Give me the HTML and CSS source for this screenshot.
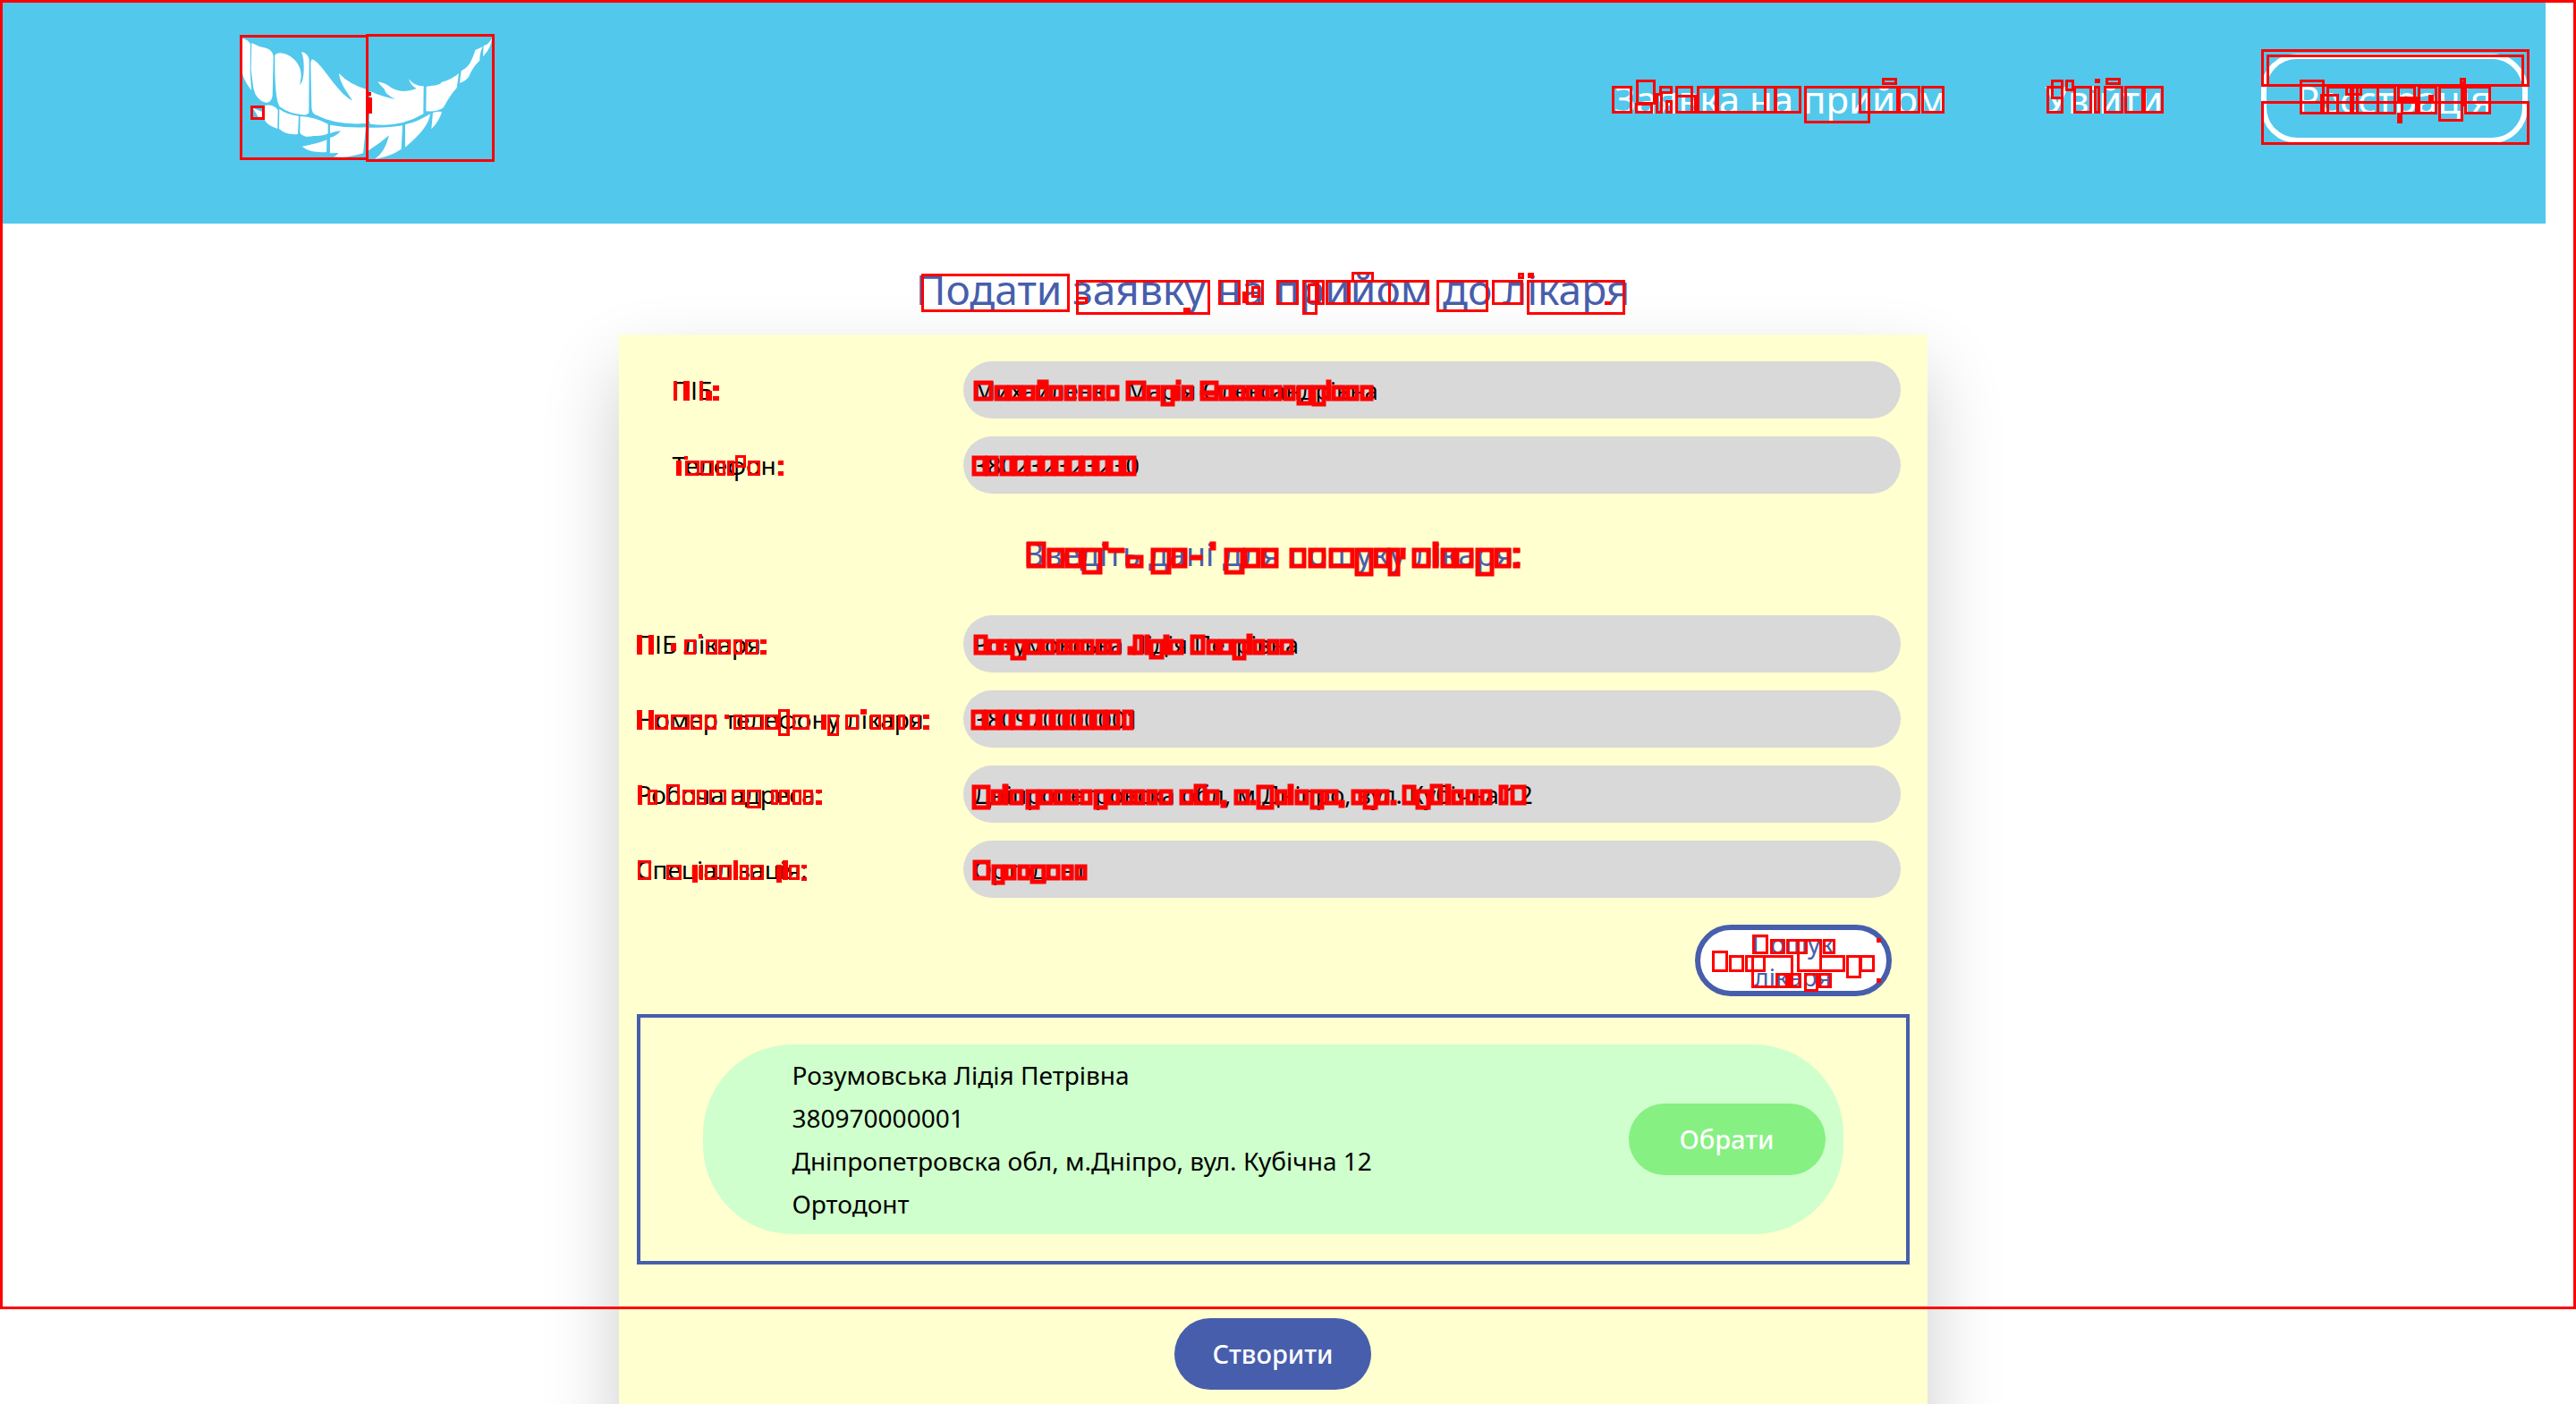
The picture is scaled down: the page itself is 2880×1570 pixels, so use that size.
FILE: index.html
```html
<!DOCTYPE html>
<html lang="uk">
<head>
<meta charset="utf-8">
<title>Подати заявку на прийом до лікаря</title>
<link rel="stylesheet" href="styles.css">
</head>
<body>
<header class="header">
  <a class="logo" href="#" aria-label="На головну">
    <svg class="logo-mark" viewBox="120 60 840 420" fill="#fff" aria-hidden="true">
      <path d="M122 68Q142 72 150 88L149 180 153 243Q124 205 122 180Z"/>
      <path d="M154 84Q180 98 205 102 224 110 227 128L224 262Q218 288 200 284 168 274 160 236L152 175Z"/>
      <path d="M232 126Q236 117 252 118C292 122 322 160 320 195L316 226Q328 212 329 175 330 135 321 114 344 118 347 142L346 318Q340 328 325 325 280 322 248 298 230 270 232 126Z"/>
      <path d="M356 138C395 155 430 240 491 278 492 272 450 225 447 186Q480 222 540 240L538 354Q440 362 366 324 356 318 355 300L352 150Z"/>
      <path d="M552 246Q590 264 636 273 600 255 600 240 584 226 577 214 602 218 622 234 662 256 707 237 688 228 681 205 700 230 731 229L730 322Q650 370 552 356L548 345Z"/>
      <path d="M740 230Q790 226 790 216 820 210 849 186L842 235Q822 255 798 300 780 316 739 313Z"/>
      <path d="M857 178Q880 165 887 150 900 125 904 108L929 97Q918 120 919 143 895 165 882 198 870 214 852 218Z"/>
      <path d="M932 93Q948 90 960 68 958 100 930 130Z"/>
      <path d="M158 302L197 318 195 338H180Z"/>
      <path d="M197 294Q225 288 242 308L241 372Q206 360 197 342Z"/>
      <path d="M247 306Q275 326 312 329L309 390Q270 394 246 372Z"/>
      <path d="M317 330Q365 332 410 356V388Q392 398 362 396 330 404 316 386Z"/>
      <path d="M323 431Q370 424 406 409L405 450Q350 454 323 431Z"/>
      <path d="M417 359Q475 370 537 367L528 454Q490 466 460 467L428 466Q440 462 446 453L417 454V402Q440 396 453 379 438 380 417 387Z"/>
      <path d="M548 368Q610 370 660 361L656 440Q620 465 568 473 602 450 615 394 585 420 546 445Z"/>
      <path d="M669 358Q710 350 753 322 748 370 669 434Z"/>
      <path d="M762 318Q778 312 792 315 784 345 757 373Z"/>
    </svg>
  </a>
  <nav class="nav">
    <a class="nav-link" href="#">Заявка на прийом</a>
    <a class="nav-link" href="#">Увійти</a>
    <a class="nav-button" href="#">Реєстрація</a>
  </nav>
</header>
<main class="main">
  <h1 class="title">Подати заявку на прийом до лікаря</h1>
  <form class="card">
    <div class="fields">
      <div class="field field-own"><label for="name">ПІБ:</label><input id="name" type="text" value="Михайленко Марія Олександрівна"></div>
      <div class="field field-own"><label for="phone">Телефон:</label><input id="phone" type="text" value="380232323230"></div>
    </div>
    <h2 class="subtitle">Введіть дані для пошуку лікаря:</h2>
    <div class="fields">
      <div class="field"><label for="doctor">ПІБ лікаря:</label><input id="doctor" type="text" value="Розумовська Лідія Петрівна"></div>
      <div class="field"><label for="doctor-phone">Номер телефону лікаря:</label><input id="doctor-phone" type="text" value="380970000001"></div>
      <div class="field"><label for="address">Робоча адреса:</label><input id="address" type="text" value="Дніпропетровска обл, м.Дніпро, вул. Кубічна 12"></div>
      <div class="field"><label for="speciality">Спеціалізація:</label><input id="speciality" type="text" value="Ортодонт"></div>
    </div>
    <button class="button button-search" type="button">Пошук лікаря</button>
    <section class="results">
      <article class="doctor">
        <div class="doctor-info">
          <p>Розумовська Лідія Петрівна</p>
          <p>380970000001</p>
          <p>Дніпропетровска обл, м.Дніпро, вул. Кубічна 12</p>
          <p>Ортодонт</p>
        </div>
        <button class="button button-choose" type="button">Обрати</button>
      </article>
    </section>
    <button class="button button-create" type="submit">Створити</button>
  </form>
</main>
<svg class="marks" viewBox="0 0 2880 1570" aria-hidden="true"></svg>
<script src="marks.js"></script>
</body>
</html>
```

FILE: styles.css
```css
* { box-sizing: border-box; margin: 0; }
html { scrollbar-width: none; }
body { position: relative; min-height: 100vh; padding-right: 34px; overflow-x: hidden; background: #fff; color: #000; font: 28px/38px "Noto Sans", "Open Sans", sans-serif; }
.header { display: flex; justify-content: space-between; align-items: flex-start; padding: 40px 20px 70px 270px; background: #52c8ed; }
.logo-mark { display: block; width: 280px; height: 140px; }
.nav { display: flex; align-items: center; gap: 110px; padding-top: 20px; font-size: 42px; line-height: 56px; }
.nav a { color: #fff; text-decoration: none; }
.nav-link { padding-top: 2px; }
.nav-button { width: 298px; height: 100px; border: 6px solid #fff; border-radius: 40px; line-height: 90px; text-align: center; }
.title { padding: 42px 0 20px; color: #475eac; font-size: 46px; line-height: 62px; font-weight: 400; text-align: center; }
.card { display: flex; flex-direction: column; width: 1463px; max-width: 100%; margin: 0 auto; padding: 30px 20px 60px; background: #ffffcf; box-shadow: 0 40px 80px rgba(0, 0, 0, .2); }
.fields { display: grid; gap: 20px; }
.field { display: flex; justify-content: space-between; align-items: center; padding-right: 10px; }
.field-own { padding-left: 40px; }
.field input { width: 1048px; height: 64px; padding: 0 12px; border: 0; border-radius: 32px; background: #d9d9d9; color: #000; font: inherit; font-size: 27px; }
.subtitle { padding: 44px 0; color: #475eac; font-size: 36px; line-height: 48px; font-weight: 400; text-align: center; }
.button { width: 220px; height: 80px; padding: 0; border: 0; border-radius: 40px; color: #fff; font: inherit; font-size: 29px; font-weight: 500; }
.button-search { display: flex; align-items: center; align-self: flex-end; margin: 30px 20px 20px; padding: 0 40px; border: 6px solid #475eac; background: #fff; color: #475eac; font-size: 28px; font-weight: 400; line-height: 37px; }
.results { padding: 30px 70px; border: 4px solid #475eac; }
.doctor { display: flex; justify-content: space-between; align-items: center; padding: 10px 20px 10px 100px; border-radius: 100px; background: #cfffcc; line-height: 48px; }
.button-choose { background: #86f082; }
.button-create { align-self: center; margin-top: 60px; background: #475eac; }
.marks { position: absolute; top: 0; left: 0; width: 2880px; height: 1570px; overflow: hidden; pointer-events: none; }
.mark { fill: none; stroke: #f00; stroke-width: 3; }
.mark-dense { stroke-width: 5; }
.mark-solid { fill: #f00; }
```

FILE: marks.js
```js
// Each group has an origin, a scale and the default top and bottom of its line.
// A mark is "left,right" or "left,top,right,bottom"; a star fills it.
const groups = [
  { at: [0, 0], scale: [1, 1], line: [0, 0], marks: '0,0,2880,1464' },
  { at: [230, 20], scale: [3, 3], line: [0, 0], marks: '115,58,545,476 538,54,968,482 150,294,197,341 545,268,555,322* 543,249,550,255*' },
  { at: [1780, 40], scale: [2.3758, 3], line: [168, 262], marks: '53,108 116,148,168,230 113,225,162,262 177,168,215,196 168,192,188,262 195,216,215,262 222,268 222,198,277,262 278,332 331,463 457,489 485,555 563,168,738,293 707,814 770,141,809,166 812,872 875,937 1208,1253 1219,147,1253,212 1257,148,1280,185 1277,1329 1333,1349 1335,145,1350,160* 1360,1411 1364,141,1404,166 1414,1465 1464,1519' },
  { at: [2480, 0], scale: [3, 3], line: [288, 384], marks: '144,165,1044,291 162,183,1026,291 144,339,1044,486 273,267,356,384 342,315,404,384 363,450 426,288,482,320 447,470 462,540 531,597 600,288,664,345 612,336,668,384 600,378,617,413* 610,324,668,345* 670,735 705,318,722,345* 738,288,822,408 810,261,831,282 817,282,831,357* 825,915' },
  { at: [1010, 290], scale: [1.889, 3], line: [70, 152], marks: '38,48,352,176 364,70,648,185 364,126,390,149 591,163,606,176 665,712 723,761 716,108,724,146* 735,90,754,130 788,834 842,70,875,185 854,82,875,148 873,890 892,943 939,1030 947,43,993,77 1024,1110 1125,70,1236,176 1243,1310 1297,46,1311,66 1318,46,1332,64 1317,70,1524,185 1481,142,1495,152*' },
  { dense: true, at: [1080, 410], scale: [3, 3], line: [63, 114], marks: '27,48,90,114 97,140 142,190 190,230 234,276 240,45,275,66 280,325 330,370 378,420 427,465 470,513 537,48,603,114 606,650 655,63,699,132 700,718 705,45,718,60* 722,762 786,48,846,114 786,80,846,90* 848,893 893,935 940,980 980,1018 1020,1058 1064,1105 1111,63,1160,129 1162,63,1206,132 1209,45,1224,114 1228,1272 1276,1318 1323,1365' },
  { dense: true, at: [1080, 410], scale: [3, 3], line: [300, 366], marks: '21,68 67,108 113,160 159,206 205,252 251,298 297,342 342,389 388,435 434,480 480,526 526,570' },
  { at: [1130, 590], scale: [2.6133, 3], line: [69, 134], dense: true, marks: '47,48,103,134 108,157 160,208 210,69,267,155 268,48,285,76* 285,69,333,84* 336,92,387,134 411,69,468,155 470,516 524,92,560,108* 583,48,598,76* 625,69,682,155 680,728 733,781 816,863 870,920 931,1003 1006,69,1058,161 1060,1108 1103,69,1138,161 1140,69,1152,104* 1174,1226 1234,48,1250,134* 1257,1298 1300,1352 1360,69,1412,161 1414,1462 1468,69,1488,84* 1468,118,1488,134*' },
  { dense: true, at: [690, 670], scale: [1.96, 3], line: [136, 186], marks: '782,121,811,186 811,838 838,863 863,136,896,204 896,930 930,958 962,988 990,1014 1016,1044 1048,1075 1077,1103 1120,160,1134,186* 1130,121,1153,186 1156,121,1166,186* 1166,136,1198,201 1198,121,1210,186* 1210,1240 1256,121,1288,186 1292,1320 1320,1348 1348,136,1378,204 1380,118,1391,186* 1393,1420 1424,1450 1453,1482' },
  { at: [690, 670], scale: [1.96, 3], line: [136, 186], marks: '44,121,54,186* 68,121,80,186* 118,146,130,175* 147,172 178,118,187,132* 195,220 222,248 255,274 280,310 314,136,328,150* 314,172,328,186*' },
  { dense: true, at: [690, 670], scale: [1.96, 3], line: [373, 438], marks: '777,808 806,837 836,866 865,896 895,925 924,955 953,984 983,1014 1012,1043 1042,1072 1071,1101 1108,1130' },
  { at: [690, 670], scale: [1.96, 3], line: [388, 438], marks: '44,373,54,438* 68,373,80,438* 82,112 118,158 160,187 192,218 235,388,245,402* 255,275 280,322 324,352 353,370,379,459 385,422 446,458* 460,388,487,459 500,530 534,370,546,386* 554,578 582,608 615,632 640,665 670,388,684,402* 670,424,684,438*' },
  { at: [680, 360], scale: [1.7422, 3], line: [466, 516], marks: '127,198,134,264* 147,198,158,264* 177,198,185,264* 190,232,202,264* 203,214,216,230* 203,248,216,264* 133,142* 148,450,154,460* 150,178 180,205 210,228 232,246 247,448,268,490 271,296 331,464,341,480* 331,500,341,516*' },
  { at: [690, 850], scale: [1.4792, 3], line: [100, 150], marks: '34,85,42,150* 50,66 82,82,104,150 108,128 132,148 152,180 190,212 214,100,238,163 254,266 268,285 290,305 308,324 328,98,338,112* 328,136,338,150*' },
  { dense: true, at: [690, 850], scale: [1.4792, 3], line: [100, 150], marks: '587,85,617,164 618,636 637,82,647,150* 650,672 676,100,698,166 698,720 722,742 744,764 766,786 788,100,810,166 810,832 834,854 855,872 876,894 896,918 930,952 954,80,975,150 973,996 998,135,1008,160* 1021,1046 1048,135,1056,150* 1057,85,1086,164 1088,1108 1110,82,1118,150* 1121,1143 1146,100,1169,166 1170,1192 1193,135,1202,160* 1214,1232 1234,100,1257,166 1256,1276 1280,135,1288,150* 1299,85,1321,150 1321,100,1344,166 1344,80,1366,150 1369,82,1378,150* 1380,1400 1404,1424 1427,1447 1458,85,1473,150 1478,85,1503,150' },
  { at: [690, 850], scale: [1.4792, 3], line: [352, 402], marks: '34,337,56,402 82,106 124,352,133,412* 136,142* 145,165 168,190 193,337,200,402* 203,218 220,242 263,352,272,412* 274,337,282,402* 284,302 304,352,313,362* 304,392,313,402*' },
  { dense: true, at: [690, 850], scale: [1.4792, 3], line: [352, 402], marks: '588,337,617,402 620,352,641,417 641,660 662,682 684,352,708,415 710,732 735,755 757,777' },
  { at: [1860, 1010], scale: [3, 3], line: [174, 231], marks: '297,105,350,171 357,120,408,171 411,120,483,171 447,120,531,230 534,120,576,171 162,159,215,231 219,270 273,342 294,174,435,285 376,234,418,285 420,234,434,285* 418,234,462,285 522,609 612,174,663,252 657,708 471,234,519,297 519,234,564,285 715,118,729,131* 715,253,729,266*' }
];

const svg = document.querySelector('.marks');
for (const { at, scale, line, marks, dense } of groups) {
  const stroke = dense ? 4 : 3;
  for (const mark of marks.split(' ')) {
    const n = mark.replace('*', '').split(',').map(Number);
    const [l, t, r, b] = n.length === 2 ? [n[0], line[0], n[1], line[1]] : n;
    const left = Math.round(at[0] + l / scale[0]);
    const top = Math.round(at[1] + t / scale[1]);
    const right = Math.round(at[0] + r / scale[0]);
    const bottom = Math.round(at[1] + b / scale[1]);
    const rect = document.createElementNS('http://www.w3.org/2000/svg', 'rect');
    rect.classList.add('mark');
    if (dense) rect.classList.add('mark-dense');
    if (mark.endsWith('*')) rect.classList.add('mark-solid');
    rect.setAttribute('x', left + stroke / 2);
    rect.setAttribute('y', top + stroke / 2);
    rect.setAttribute('width', Math.max(right - left - stroke, 1));
    rect.setAttribute('height', Math.max(bottom - top - stroke, 1));
    svg.append(rect);
  }
}
```
